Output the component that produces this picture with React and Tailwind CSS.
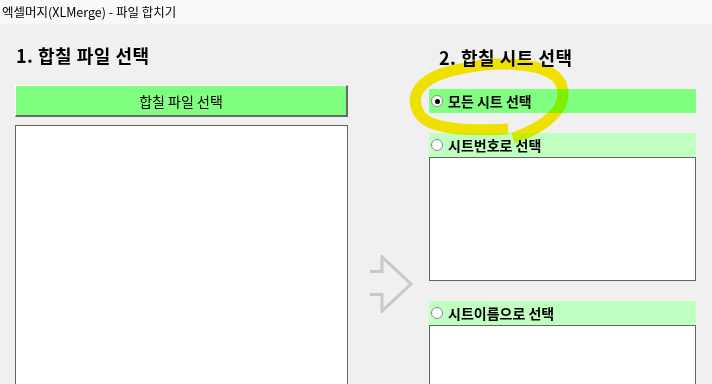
import React from "react";

const F = { fontFamily: '"Noto Sans CJK KR", "Noto Sans", sans-serif' };

function Radio({ checked }) {
  return (
    <span className="relative inline-flex h-[12px] w-[12px] shrink-0 items-center justify-center rounded-full border border-[#8a8a8a] bg-white">
      {checked && <span className="h-[5px] w-[5px] rounded-full bg-black" />}
    </span>
  );
}

function RadioRow({ checked, label, bg }) {
  return (
    <div className={`flex h-[24px] items-center gap-[5px] pl-[2px] ${bg}`}>
      <Radio checked={checked} />
      <span className="text-[14px] font-bold leading-none text-black">{label}</span>
    </div>
  );
}

export default function App() {
  return (
    <div
      className="relative h-[384px] w-[712px] overflow-hidden bg-[#f0f0f0] text-black"
      style={F}
    >
      <div className="flex h-[24px] items-center bg-[#f9f9f9] pl-[2px] text-[12.5px] leading-none">
        엑셀머지(XLMerge) - 파일 합치기
      </div>
      <div className="flex">
        {/* Left column */}
        <div className="flex w-[348px] flex-col pl-[15px]">
          <div className="flex h-[61px] items-center pl-[1px] text-[18px] font-bold leading-none tracking-[0.5px]">
            1. 합칠 파일 선택
          </div>
          <button className="flex h-[32px] w-[333px] items-center justify-center border-b-2 border-l border-r-2 border-t border-b-[#696969] border-l-white border-r-[#696969] border-t-white bg-[#80ff80] text-[14px] leading-none">
            합칠 파일 선택
          </button>
          <div className="mt-[8px] h-[270px] w-[333px] border border-[#646464] bg-white" />
        </div>
        {/* Middle arrow */}
        <div className="w-[81px] pl-[22px] pt-[231px]">
          <svg width="46" height="58" viewBox="0 0 46 58">
            <path
              d="M0 16.5 H12 V2 L41 29 L12 56 V39.5 H0"
              fill="none"
              stroke="#c8c8c8"
              strokeWidth="3"
            />
          </svg>
        </div>
        {/* Right column */}
        <div className="flex w-[267px] flex-col">
          <div className="flex h-[65px] items-center pl-[10px] text-[18px] font-bold leading-none tracking-[0.5px]">
            2. 합칠 시트 선택
          </div>
          <RadioRow checked label="모든 시트 선택" bg="bg-[#80ff80]" />
          <div className="h-[20px]" />
          <RadioRow label="시트번호로 선택" bg="bg-[#c0ffc0]" />
          <div className="h-[124px] border border-[#646464] bg-white" />
          <div className="h-[20px]" />
          <RadioRow label="시트이름으로 선택" bg="bg-[#c0ffc0]" />
          <div className="h-[100px] border border-[#646464] bg-white" />
        </div>
      </div>
      {/* Hand-drawn yellow highlight */}
      <svg
        className="pointer-events-none absolute left-0 top-0 mix-blend-multiply"
        width="712"
        height="384"
      >
        <path
          d="M508 129 C475 131 428 131 419 113 C408 94 422 76 460 69 C500 60 556 62 562 87 C568 108 546 127 513 138"
          fill="none"
          stroke="#ffee00"
          strokeWidth="11"
          strokeLinecap="butt"
          strokeLinejoin="round"
        />
      </svg>
    </div>
  );
}
